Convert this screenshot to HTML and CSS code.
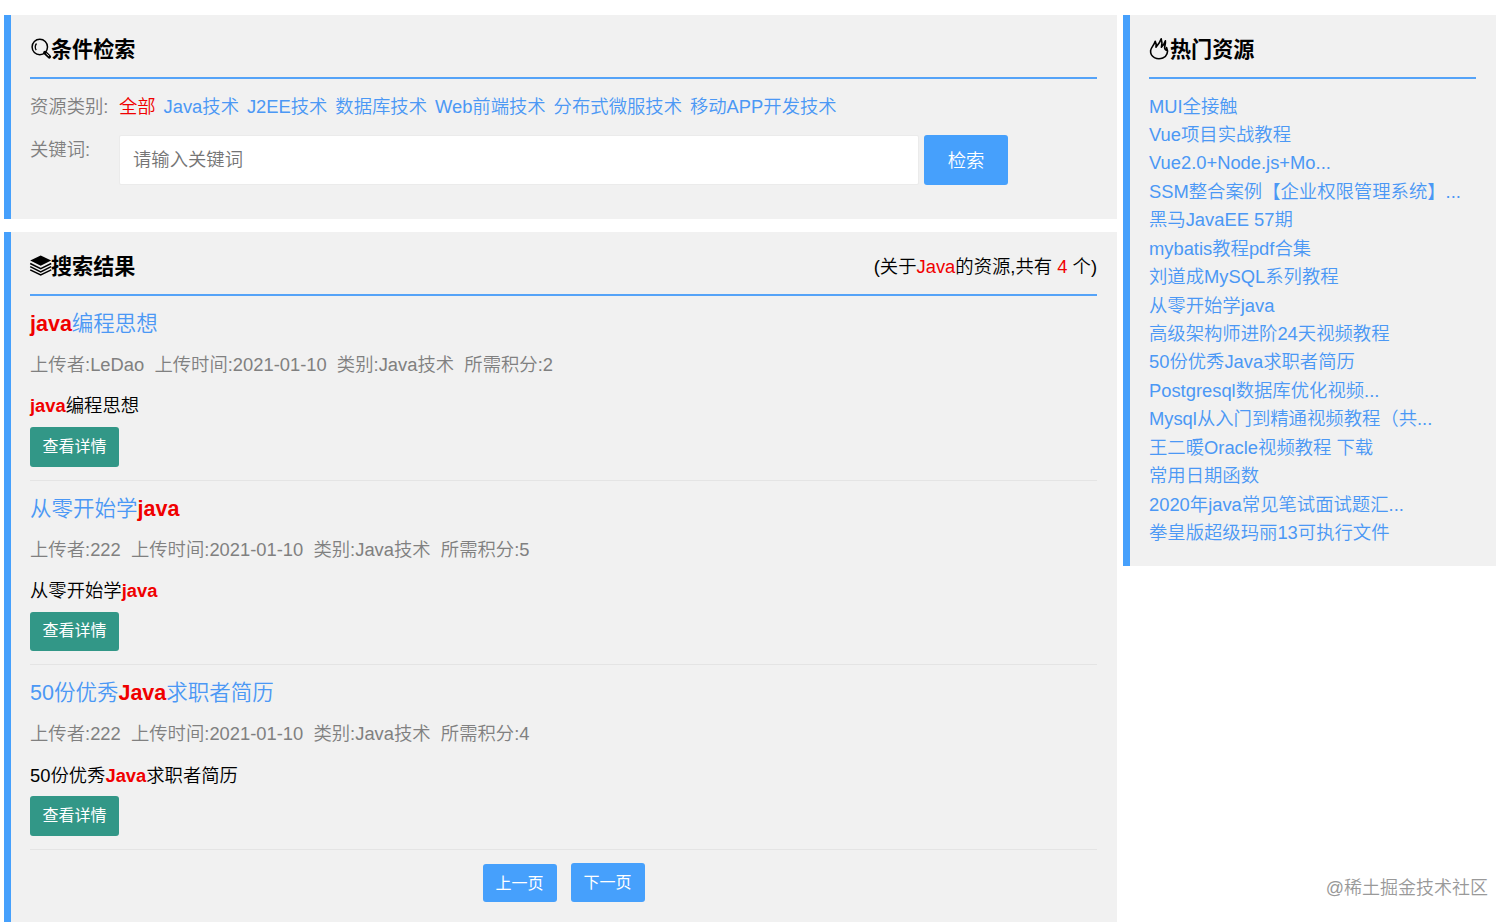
FILE: index.html
```html
<!DOCTYPE html>
<html lang="zh-CN">
<head>
    <meta charset="UTF-8">
    <meta name="viewport" content="width=device-width, initial-scale=1.0">
    <title>资源搜索</title>
    <link rel="stylesheet" href="styles.css">
</head>
<body>
    <div class="container">
        <div class="main">
            <div class="panel search">
                <div class="panel-header">
                    <h2>
                        <svg class="icon" viewBox="0 0 21 22" fill="none" stroke="#000">
                            <circle cx="9.8" cy="9" r="7.7" stroke-width="1.5"/>
                            <path d="M6.5 5.5Q4.1 8.7 6.2 12.2" stroke-width="1.3"/>
                            <path d="M15 14.6L19.3 18.8" stroke-width="3.6" stroke-linecap="round"/>
                            <path d="M16.3 15.6L18.9 18" stroke="#f1f1f1" stroke-width="1"/>
                        </svg>条件检索
                    </h2>
                </div>
                <div class="row">
                    <span class="label">资源类别:</span>
                    <div class="types">
                        <a href="#" class="red">全部</a>
                        <a href="#">Java技术</a>
                        <a href="#">J2EE技术</a>
                        <a href="#">数据库技术</a>
                        <a href="#">Web前端技术</a>
                        <a href="#">分布式微服技术</a>
                        <a href="#">移动APP开发技术</a>
                    </div>
                </div>
                <div class="row">
                    <span class="label">关键词:</span>
                    <form class="search-form">
                        <input type="text" placeholder="请输入关键词">
                        <button type="button" class="btn btn-search">检索</button>
                    </form>
                </div>
            </div>

            <div class="panel results">
                <div class="panel-header">
                    <h2>
                        <svg class="icon" viewBox="0 0 21 22">
                            <path d="M10.7 0.6L21.2 5.6L10.7 10.7L0.2 5.6Z"/>
                            <path d="M0.2 8.5L10.7 13.6L21.2 8.5M0.2 11.7L10.7 16.8L21.2 11.7M0.2 14.9L10.7 20L21.2 14.9" fill="none" stroke="#000" stroke-width="1.5"/>
                        </svg>搜索结果
                    </h2>
                    <span class="count">(关于<span class="red">Java</span>的资源,共有 <span class="red">4</span> 个)</span>
                </div>

                <div class="item">
                    <a href="#" class="item-title"><b>java</b>编程思想</a>
                    <p class="item-info">上传者:LeDao&nbsp; 上传时间:2021-01-10&nbsp; 类别:Java技术&nbsp; 所需积分:2</p>
                    <p class="item-text"><b>java</b>编程思想</p>
                    <button class="btn btn-detail">查看详情</button>
                </div>
                <div class="item">
                    <a href="#" class="item-title">从零开始学<b>java</b></a>
                    <p class="item-info">上传者:222&nbsp; 上传时间:2021-01-10&nbsp; 类别:Java技术&nbsp; 所需积分:5</p>
                    <p class="item-text">从零开始学<b>java</b></p>
                    <button class="btn btn-detail">查看详情</button>
                </div>
                <div class="item">
                    <a href="#" class="item-title">50份优秀<b>Java</b>求职者简历</a>
                    <p class="item-info">上传者:222&nbsp; 上传时间:2021-01-10&nbsp; 类别:Java技术&nbsp; 所需积分:4</p>
                    <p class="item-text">50份优秀<b>Java</b>求职者简历</p>
                    <button class="btn btn-detail">查看详情</button>
                </div>

                <div class="pager">
                    <button class="btn btn-page prev">上一页</button>
                    <button class="btn btn-page">下一页</button>
                </div>
            </div>
        </div>

        <div class="panel hot">
            <div class="panel-header">
                <h2>
                    <svg class="icon" viewBox="0 0 21 22" fill="none" stroke="#000" stroke-width="1.6" stroke-linejoin="round" stroke-linecap="round">
                        <path d="M5.4 19.6C2.6 18 1.4 15.4 1.6 12.6C1.9 9.4 5.2 7.2 6.2 3.2C7.2 5 7.4 6.8 7 9.2C9.2 6.8 11.2 4.2 12.2 0.8C13.2 3.6 13.2 6.2 12.4 9.2C14.2 7.4 15.6 5.4 16.4 2.8C16.8 5.6 15.6 7.8 15.6 10C15.7 11.2 16.2 11.8 17.2 12.2L17.6 9.6C19.6 13.6 18 18.4 13.8 20C11 21 8 20.9 5.4 19.6"/>
                    </svg>热门资源
                </h2>
            </div>
            <ul class="hot-list">
                <li><a href="#">MUI全接触</a></li>
                <li><a href="#">Vue项目实战教程</a></li>
                <li><a href="#">Vue2.0+Node.js+Mo...</a></li>
                <li><a href="#">SSM整合案例【企业权限管理系统】...</a></li>
                <li><a href="#">黑马JavaEE 57期</a></li>
                <li><a href="#">mybatis教程pdf合集</a></li>
                <li><a href="#">刘道成MySQL系列教程</a></li>
                <li><a href="#">从零开始学java</a></li>
                <li><a href="#">高级架构师进阶24天视频教程</a></li>
                <li><a href="#">50份优秀Java求职者简历</a></li>
                <li><a href="#">Postgresql数据库优化视频...</a></li>
                <li><a href="#">Mysql从入门到精通视频教程（共...</a></li>
                <li><a href="#">王二暖Oracle视频教程 下载</a></li>
                <li><a href="#">常用日期函数</a></li>
                <li><a href="#">2020年java常见笔试面试题汇...</a></li>
                <li><a href="#">拳皇版超级玛丽13可执行文件</a></li>
            </ul>
        </div>
    </div>
    <div class="watermark">@稀土掘金技术社区</div>
</body>
</html>
```
FILE: styles.css
```css
* {
    box-sizing: border-box;
}
body {
    margin: 0;
    height: 922px;
    overflow: hidden;
    background-color: #fff;
    color: #000;
    font-family: "Liberation Sans", "Noto Sans CJK SC", sans-serif;
    font-size: 18.35px;
    font-weight: 350;
    line-height: 28px;
}
a {
    color: #4b98f5;
    text-decoration: none;
}
h2, p, ul {
    margin: 0;
    padding: 0;
}
b {
    color: #f00000;
    font-weight: bold;
}
.red {
    color: #f00000;
}
.container {
    display: flex;
    align-items: flex-start;
    gap: 6px;
    padding: 15px 16px 0 4px;
}
.main {
    width: 1113px;
    flex-shrink: 0;
}
.panel {
    background-color: #f1f1f1;
    border-left: 7px solid #46a0fc;
    padding: 0 20px 0 19px;
}
.panel-header {
    display: flex;
    justify-content: space-between;
    align-items: center;
    height: 64px;
    padding-top: 7px;
    border-bottom: 2px solid #55a3f8;
}
.panel-header h2 {
    display: flex;
    align-items: center;
    font-size: 21.1px;
    font-weight: bold;
}
.icon {
    width: 21px;
    height: 22px;
    margin-bottom: 2px;
    overflow: visible;
}
.search {
    height: 204px;
    margin-bottom: 13px;
}
.row {
    display: flex;
}
.label {
    width: 89px;
    margin-top: 14px;
    color: #808080;
}
.types {
    display: flex;
    gap: 7.9px;
    height: 43px;
    padding-top: 14px;
}
.search-form {
    display: flex;
    gap: 5px;
    margin-top: 13px;
}
.search-form input {
    width: 800px;
    height: 50px;
    padding: 0 13px;
    border: 1px solid #ebebeb;
    border-radius: 2px;
    background-color: #fff;
    font: inherit;
}
.search-form input::placeholder {
    color: #757575;
}
.btn {
    padding: 0;
    border: none;
    border-radius: 3px;
    background-color: #46a0fc;
    color: #fff;
    font: inherit;
    cursor: pointer;
}
.btn-search {
    width: 84px;
    height: 50px;
    padding-top: 1px;
}
.results {
    height: 720px;
}
.item {
    height: 184.6px;
    padding-top: 13px;
    border-bottom: 1px solid #e4e4e4;
}
.item-title {
    display: block;
    font-size: 21.5px;
    line-height: 30px;
}
.item-info {
    margin-top: 12px;
    color: #808080;
}
.item-text {
    margin-top: 13.4px;
}
.btn-detail {
    display: block;
    width: 89px;
    height: 39.6px;
    margin-top: 6.6px;
    background-color: #329787;
    font-size: 16px;
    font-weight: 400;
}
.pager {
    display: flex;
    justify-content: center;
    align-items: flex-end;
    gap: 14px;
    padding-top: 13px;
}
.btn-page {
    width: 74px;
    height: 39px;
    padding-top: 1px;
    font-size: 16px;
    font-weight: 400;
}
.prev {
    height: 38px;
    padding-top: 2px;
}
.hot {
    flex: 1;
    height: 551px;
}
.hot-list {
    padding-top: 13.6px;
    list-style: none;
    line-height: 28.42px;
    white-space: nowrap;
}
.watermark {
    position: absolute;
    right: 24px;
    bottom: 20px;
    color: #999;
    font-size: 18px;
}
```
